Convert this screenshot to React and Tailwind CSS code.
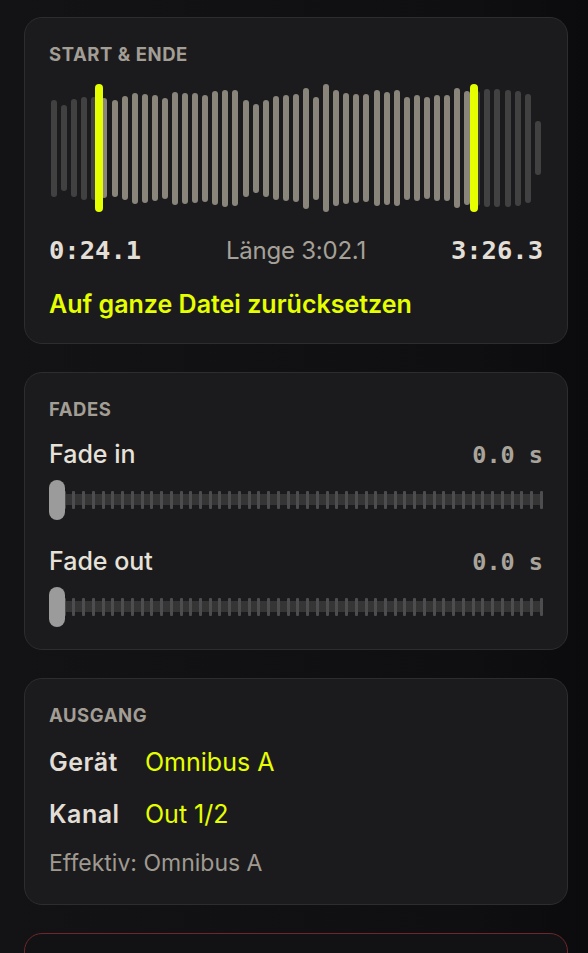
import React from "react";

const HEIGHTS = [97,86,98,103,103,100,97,104,111,109,106,101,113,111,110,107,114,117,116,97,89,97,104,106,108,121,103,128,116,111,109,108,116,113,116,103,106,102,106,106,120,114,115,118,118,117,115,109,54];

const sans = "[font-family:Inter,'Noto_Sans',sans-serif]";
const mono = "[font-family:'DejaVu_Sans_Mono',monospace]";

function Card({ children, className = "" }) {
  return (
    <div className={`rounded-[18px] border border-[#2d2d30] bg-[#1b1b1d] px-6 pt-6 ${className}`}>
      {children}
    </div>
  );
}

function Heading({ children }) {
  return (
    <div className="text-[18.5px] leading-[24px] font-bold tracking-[0.03em] text-[#a39e95] uppercase">
      {children}
    </div>
  );
}

function Waveform() {
  return (
    <div className="relative mt-[18px] h-[128px]">
      <div className="flex h-full items-center justify-around">
        {HEIGHTS.map((h, i) => {
          const active = i >= 5 && i <= 41;
          return (
            <div
              key={i}
              className={`w-[6px] rounded-full ${active ? "bg-[#8a857b]" : "bg-[#424142]"}`}
              style={{ height: h }}
            />
          );
        })}
      </div>
      <div className="absolute top-0 left-[calc(10.04%-4px)] h-full w-[8px] rounded-full bg-[#e6ff00]" />
      <div className="absolute top-0 left-[calc(85.96%-4px)] h-full w-[8px] rounded-full bg-[#e6ff00]" />
    </div>
  );
}

function Slider() {
  const ticks = Array.from({ length: 51 });
  return (
    <div className="relative mt-[9px] h-[40px]">
      <div className="absolute inset-x-0 top-[14px] flex h-[11px] items-center justify-between bg-[#353536] pl-[4px]">
        {ticks.map((_, i) => (
          <div key={i} className="h-[18px] w-[3px] shrink-0 rounded-[1px] bg-[#4d4d4f]" />
        ))}
      </div>
      <div className="absolute top-0 left-0 h-[40px] w-[16px] rounded-full bg-[#9b9b9b]" />
    </div>
  );
}

function FadeRow({ label, first }) {
  return (
    <div className={first ? "mt-[17px]" : "mt-[25px]"}>
      <div className="flex items-baseline justify-between">
        <span className="text-[25px] leading-[32px] font-medium text-[#e6e2da]">{label}</span>
        <span className={`${mono} text-[23.5px] leading-[32px] font-bold text-[#a9a49b]`}>0.0 s</span>
      </div>
      <Slider />
    </div>
  );
}

export default function App() {
  return (
    <div className={`${sans} min-h-[953px] w-full bg-[linear-gradient(to_right,#131315,#0f0f11_80%,#0b0b0d)] pl-6 pr-5 pt-[17px] overflow-hidden`}>
      <div className="flex flex-col gap-7">
        <Card className="pb-6">
          <Heading>Start &amp; Ende</Heading>
          <Waveform />
          <div className="mt-[22px] flex items-baseline justify-between">
            <span className={`${mono} text-[25.5px] leading-[32px] font-bold text-[#e3dfd7]`}>0:24.1</span>
            <span className="text-[24px] leading-[32px] text-[#a6a198] tracking-[-0.01em]">Länge 3:02.1</span>
            <span className={`${mono} text-[25.5px] leading-[32px] font-bold text-[#e3dfd7]`}>3:26.3</span>
          </div>
          <div className="mt-[22px] text-[25px] leading-[30px] font-semibold text-[#e6ff00]">
            Auf ganze Datei zurücksetzen
          </div>
        </Card>

        <Card className="pb-[22px]">
          <Heading>Fades</Heading>
          <FadeRow label="Fade in" first />
          <FadeRow label="Fade out" />
        </Card>

        <Card className="pb-[26px]">
          <Heading>Ausgang</Heading>
          <div className="mt-[19px] grid grid-cols-[96px_1fr] gap-y-[20px] text-[25px] leading-[32px]">
            <span className="font-semibold tracking-[0.02em] text-[#e2ded6]">Gerät</span>
            <span className="text-[#e6ff00]">Omnibus A</span>
            <span className="font-semibold tracking-[0.02em] text-[#e2ded6]">Kanal</span>
            <span className="text-[#e6ff00]">Out 1/2</span>
          </div>
          <div className="mt-[18px] text-[23px] leading-[30px] text-[#9f9a91]">Effektiv: Omnibus A</div>
        </Card>

        <div className="h-[120px] rounded-[18px] border border-[#6e272b] bg-[#121113]" />
      </div>
    </div>
  );
}
